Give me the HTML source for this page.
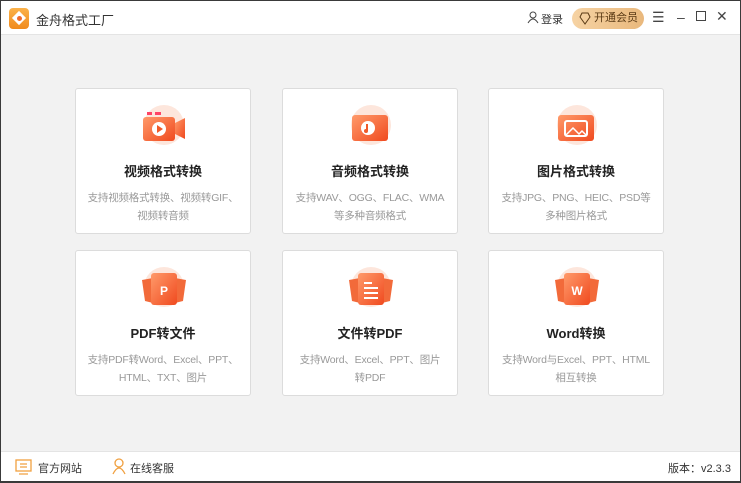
<!DOCTYPE html>
<html><head><meta charset="utf-8"><style>
*{margin:0;padding:0;box-sizing:border-box}
body{width:741px;height:483px;overflow:hidden;font-family:"Liberation Sans","Noto Sans CJK SC",sans-serif;background:#3a3a3a;position:relative}
.win{position:absolute;left:1px;top:1px;width:739px;height:480px;background:#f2f2f2}
.top{position:absolute;left:0;top:0;width:739px;height:34px;background:#fff;border-bottom:1px solid #e4e4e4}
.logo{position:absolute;left:8px;top:7px;width:20px;height:21px;border-radius:4px;background:linear-gradient(#fbb24a,#f08a1c)}
.logo i{position:absolute;left:5px;top:5px;width:10px;height:10px;background:#fff;transform:rotate(45deg)}
.logo b{position:absolute;left:7.5px;top:7.5px;width:5px;height:5px;background:#ef6b2c;border-radius:50%}
.title{position:absolute;left:35px;top:9px;font-size:13px;color:#333}
.login{position:absolute;left:527px;top:10px;font-size:11px;color:#333}
.vip{position:absolute;left:571px;top:7px;width:72px;height:21px;border-radius:11px;background:linear-gradient(90deg,#f6d3a4,#e9b87c);font-size:11px;color:#5a3a15;line-height:21px;padding-left:22px}
.ctl{position:absolute;top:8px;font-size:14px;color:#444}
.card{position:absolute;width:176px;height:146px;background:#fff;border:1px solid #dcdcdc;border-radius:3px;text-align:center}
.card svg{position:absolute;left:63px;top:14px}
.card h3{position:absolute;top:72px;width:100%;font-size:13px;color:#222;font-weight:bold}
.card p{position:absolute;top:100px;left:0;right:0;font-size:10.5px;color:#999;line-height:18px;letter-spacing:-0.2px;padding:0 6px}
.foot{position:absolute;left:0;top:450px;width:739px;height:30px;background:#fff;border-top:1px solid #e4e4e4;font-size:11px;color:#333}
</style></head><body><div class="win">
<div class="top">
<div class="logo"><i></i><b></b></div>
<div class="title">金舟格式工厂</div>
<svg style="position:absolute;left:526px;top:10px" width="12" height="13"><circle cx="6" cy="4" r="3" fill="none" stroke="#444"/><path d="M1 12 Q6 4 11 12" fill="none" stroke="#444"/></svg>
<div class="login" style="left:540px">登录</div>
<div class="vip"><svg style="position:absolute;left:7px;top:4px" width="12" height="13"><path d="M6 12 L1 5 L3 1 H9 L11 5 Z" fill="none" stroke="#5a3a15"/></svg>开通会员</div>
<div class="ctl" style="left:651px">☰</div>
<div class="ctl" style="left:676px">–</div>
<div class="ctl" style="left:695px;top:10px;width:10px;height:10px;border:1.5px solid #444"></div>
<div class="ctl" style="left:715px;top:7px">✕</div>
</div>

<svg width="0" height="0" style="position:absolute"><defs><linearGradient id="g" x1="0" y1="0" x2="1" y2="1"><stop offset="0" stop-color="#ff9a6a"/><stop offset="1" stop-color="#f04a1f"/></linearGradient></defs></svg>

<div class="card" style="left:74px;top:87px"><svg width="50" height="48"><circle cx="25" cy="22" r="20" fill="#fde6dc"/><rect x="4" y="14" width="32" height="24" rx="3" fill="url(#g)"/><path d="M36 20 L46 15 V36 L36 31Z" fill="url(#g)"/><rect x="8" y="9" width="5" height="3" fill="#f46"/><rect x="16" y="9" width="6" height="3" fill="#f46"/><circle cx="20" cy="26" r="7" fill="#fff"/><path d="M18 22 L24 26 L18 30Z" fill="#f05a2a"/></svg><h3>视频格式转换</h3><p>支持视频格式转换、视频转GIF、<br>视频转音频</p></div>

<div class="card" style="left:281px;top:87px"><svg width="50" height="48"><circle cx="25" cy="22" r="20" fill="#fde6dc"/><rect x="6" y="12" width="36" height="26" rx="3" fill="url(#g)"/><circle cx="22" cy="25" r="7" fill="#fff"/><path d="M21 21 V28" stroke="#f05a2a" stroke-width="2"/><circle cx="20" cy="28" r="2" fill="#f05a2a"/></svg><h3>音频格式转换</h3><p>支持WAV、OGG、FLAC、WMA<br>等多种音频格式</p></div>

<div class="card" style="left:487px;top:87px"><svg width="50" height="48"><circle cx="25" cy="22" r="20" fill="#fde6dc"/><rect x="6" y="12" width="36" height="26" rx="3" fill="url(#g)"/><rect x="13" y="18" width="22" height="15" rx="2" fill="none" stroke="#fff" stroke-width="2"/><path d="M14 32 L21 25 L27 31 L30 28 L34 32" fill="none" stroke="#fff" stroke-width="1.5"/></svg><h3>图片格式转换</h3><p>支持JPG、PNG、HEIC、PSD等<br>多种图片格式</p></div>

<div class="card" style="left:74px;top:249px"><svg width="50" height="48"><circle cx="25" cy="22" r="20" fill="#fde6dc"/><path d="M3 15 L14 13 V38 L6 36Z" fill="#f26a3a"/><path d="M47 15 L36 13 V38 L44 36Z" fill="#f26a3a"/><rect x="12" y="8" width="26" height="32" rx="3" fill="url(#g)"/><text x="25" y="30" font-size="12" font-weight="bold" fill="#fff" text-anchor="middle" font-family="Liberation Sans">P</text></svg><h3>PDF转文件</h3><p>支持PDF转Word、Excel、PPT、<br>HTML、TXT、图片</p></div>

<div class="card" style="left:281px;top:249px"><svg width="50" height="48"><circle cx="25" cy="22" r="20" fill="#fde6dc"/><path d="M3 15 L14 13 V38 L6 36Z" fill="#f26a3a"/><path d="M47 15 L36 13 V38 L44 36Z" fill="#f26a3a"/><rect x="12" y="8" width="26" height="32" rx="3" fill="url(#g)"/><path d="M18 18 H26 M18 23 H32 M18 28 H32 M18 33 H32" stroke="#fff" stroke-width="2"/></svg><h3>文件转PDF</h3><p>支持Word、Excel、PPT、图片<br>转PDF</p></div>

<div class="card" style="left:487px;top:249px"><svg width="50" height="48"><circle cx="25" cy="22" r="20" fill="#fde6dc"/><path d="M3 15 L14 13 V38 L6 36Z" fill="#f26a3a"/><path d="M47 15 L36 13 V38 L44 36Z" fill="#f26a3a"/><rect x="12" y="8" width="26" height="32" rx="3" fill="url(#g)"/><text x="25" y="30" font-size="12" font-weight="bold" fill="#fff" text-anchor="middle" font-family="Liberation Sans">W</text></svg><h3>Word转换</h3><p>支持Word与Excel、PPT、HTML<br>相互转换</p></div>

<div class="foot">
<svg style="position:absolute;left:14px;top:7px" width="17" height="16"><rect x="1" y="1" width="15" height="11" fill="none" stroke="#f0a040" stroke-width="1.3"/><path d="M5 5 H12 M5 8 H12 M4 15 H13" stroke="#f0a040" stroke-width="1.3"/></svg>
<span style="position:absolute;left:37px;top:8px">官方网站</span>
<svg style="position:absolute;left:111px;top:6px" width="14" height="17"><circle cx="7" cy="5" r="4" fill="none" stroke="#f0a040" stroke-width="1.3"/><path d="M1 16 Q7 4 13 16" fill="none" stroke="#f0a040" stroke-width="1.3"/></svg>
<span style="position:absolute;left:129px;top:8px">在线客服</span>
<span style="position:absolute;left:667px;top:8px">版本：v2.3.3</span>
</div>
</div></body></html>
